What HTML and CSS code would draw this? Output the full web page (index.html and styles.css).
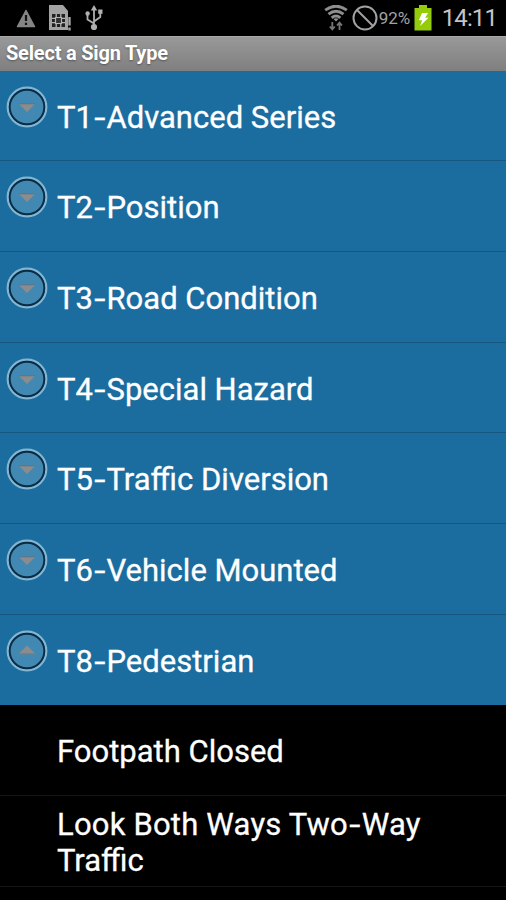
FILE: index.html
```
<!DOCTYPE html>
<html lang="en">
<head>
  <meta charset="utf-8">
  <title>Select a Sign Type</title>
  <link rel="stylesheet" href="styles.css">
</head>
<body>
  <!-- shared shapes for the expand / collapse buttons -->
  <svg class="defs" width="0" height="0">
    <symbol id="ring" viewBox="0 0 42 42">
      <circle cx="21" cy="21" r="19.3" fill="#4189b3" stroke="#83b6d3" stroke-width="2.2"/>
      <circle cx="21" cy="21" r="17.3" fill="none" stroke="#0b2c43" stroke-width="1.9"/>
    </symbol>
    <symbol id="down" viewBox="0 0 42 42">
      <use href="#ring"/>
      <path d="M13 18h16l-8 8z" fill="#8c8c8c"/>
      <path d="M13 17.8h16" stroke="#5c7686" stroke-width="1"/>
    </symbol>
    <symbol id="up" viewBox="0 0 42 42">
      <use href="#ring"/>
      <path d="M13 23.5h16l-8-8z" fill="#8c8c8c"/>
      <path d="M13 24h16" stroke="#6c8390" stroke-width="1"/>
    </symbol>
  </svg>

  <div class="status-bar">
    <div class="notifications">
      <svg class="warning" width="20" height="19" viewBox="0 0 20 19">
        <path d="M10 1.5L18.5 17.5h-17z" fill="#858585" stroke="#858585" stroke-width="1.5" stroke-linejoin="round"/>
        <path d="M10 6v6M10 13.7v2.4" stroke="#111" stroke-width="2.2"/>
      </svg>
      <svg class="sim" width="24" height="28" viewBox="0 0 24 28">
        <path d="M1 1h14l5 6v19H1z" fill="#a3a3a3"/>
        <path d="M4 10h13v13H4z" fill="#222"/>
        <path d="M4 14.3h13M4 18.7h13M8.2 10v13M12.8 10v13" stroke="#b5b5b5" stroke-width="1.3"/>
        <path d="M7.5 13.5h6v6h-6z" fill="#333" stroke="#b5b5b5" stroke-width="1.2"/>
        <path d="M21.5 13v8.5M21.5 23.5v3" stroke="#a3a3a3" stroke-width="2.4"/>
      </svg>
      <svg class="usb" width="18" height="26" viewBox="0 0 18 26">
        <path d="M9 5v17M9 18.5L2.5 14.5V9M9 16.5L15.3 12V7" fill="none" stroke="#b0b0b0" stroke-width="1.8"/>
        <path d="M9 0l3.2 5.5H5.8z" fill="#b0b0b0"/>
        <circle cx="9" cy="22" r="3.1" fill="#b0b0b0"/>
        <circle cx="2.6" cy="8.5" r="2.2" fill="#b0b0b0"/>
        <path d="M13.2 4.5h4.3v4.3h-4.3z" fill="#b0b0b0"/>
      </svg>
    </div>
    <div class="system">
      <svg class="wifi" width="24" height="26" viewBox="0 0 24 26">
        <g fill="none" stroke="#8e8e8e" stroke-width="2.9">
          <path d="M1.2 5.1Q12-2.7 22.8 5.1"/>
          <path d="M4.5 9.2Q12 3.3 19.5 9.2"/>
          <path d="M7.7 12.8Q12 9 16.3 12.8"/>
        </g>
        <path d="M9.5 14Q12 12.3 14.5 14L12 16.5z" fill="#8e8e8e"/>
        <path d="M8.3 17v7M5.8 21.5l2.5 2.8 2.5-2.8M15.5 25v-7M13 20.5l2.5-2.8 2.5 2.8" fill="none" stroke="#777" stroke-width="1.8"/>
      </svg>
      <svg class="no-signal" width="26" height="26" viewBox="0 0 26 26">
        <circle cx="13" cy="13" r="11.5" fill="none" stroke="#a2a2a2" stroke-width="2"/>
        <path d="M5 5l16 16" stroke="#a2a2a2" stroke-width="2"/>
      </svg>
      <span class="percent">92%</span>
      <svg class="battery" width="18" height="26" viewBox="0 0 18 26">
        <path d="M5 0h8v3h4.5v22.5H.5V3H5z" fill="#94cc0c"/>
        <path d="M8 8h6l-2.8 4.8h3.3L6 21l2.3-5.8H4.8z" fill="#fff"/>
      </svg>
      <span class="clock">14:11</span>
    </div>
  </div>

  <h1 class="title-bar">Select a Sign Type</h1>

  <ul class="groups">
    <li class="group"><svg class="toggle"><use href="#down"/></svg><span>T1<i>-</i>Advanced Series</span></li>
    <li class="group"><svg class="toggle"><use href="#down"/></svg><span>T2<i>-</i>Position</span></li>
    <li class="group"><svg class="toggle"><use href="#down"/></svg><span>T3<i>-</i>Road Condition</span></li>
    <li class="group"><svg class="toggle"><use href="#down"/></svg><span>T4<i>-</i>Special Hazard</span></li>
    <li class="group"><svg class="toggle"><use href="#down"/></svg><span>T5<i>-</i>Traffic Diversion</span></li>
    <li class="group"><svg class="toggle"><use href="#down"/></svg><span>T6<i>-</i>Vehicle Mounted</span></li>
    <li class="group"><svg class="toggle"><use href="#up"/></svg><span>T8<i>-</i>Pedestrian</span></li>
  </ul>
  <ul class="children">
    <li class="child">Footpath Closed</li>
    <li class="child"><div><span class="wide">Look Both Ways Two<i>-</i>Way</span> Traffic</div></li>
  </ul>
</body>
</html>
```
FILE: styles.css
```
body {
  margin: 0;
  height: 900px;
  overflow: hidden;
  background-color: #000;
  color: #fff;
  font-family: Roboto, "Liberation Sans", sans-serif;
}

ul {
  list-style: none;
  margin: 0;
  padding: 0;
}

.defs {
  display: block;
}

/* status bar */
.status-bar {
  display: flex;
  justify-content: space-between;
  height: 36px;
  box-sizing: border-box;
  padding: 0 9px 0 16px;
}

.notifications,
.system {
  display: flex;
  align-items: center;
}

.warning {
  margin-top: 1px;
}

.sim {
  margin-left: 12px;
}

.usb {
  margin-left: 13px;
}

.no-signal {
  margin-left: 4px;
}

.percent {
  width: 33px;
  margin-left: 1px;
  color: #a2a2a2;
  font-size: 17px;
  white-space: nowrap;
}

.battery {
  margin-left: 2px;
}

.clock {
  margin-left: 10px;
  color: #c4c4c4;
  font-size: 24px;
  letter-spacing: -0.9px;
}

/* title */
.title-bar {
  box-sizing: border-box;
  height: 34.5px;
  margin: 0;
  padding-left: 6px;
  background: linear-gradient(#999, #7f7f7f);
  border-top: 1px solid #aaa;
  font-size: 20px;
  font-weight: bold;
  letter-spacing: -0.2px;
  line-height: 33px;
  text-shadow: 0 1px 2px #555;
}

/* list */
.group,
.child {
  display: flex;
  align-items: center;
  box-sizing: border-box;
  height: 90.7px;
  font-size: 31px;
  line-height: 36.5px;
  -webkit-text-stroke: 0.3px #fff;
}

.group {
  background-color: #1b6d9f;
  border-bottom: 1px solid #17577f;
  padding-top: 5px;
}

.group:last-child {
  border-bottom: none;
}

/* slightly wider dash between code and name */
.group i,
.child i {
  display: inline-block;
  font-style: normal;
  padding: 0 2.5px;
  transform: scaleX(1.3);
}

.toggle {
  align-self: flex-start;
  width: 42px;
  height: 42px;
  margin: 10px 9px 0 6px;
}

.child {
  padding: 5px 60px 0 57px;
  border-bottom: 1px solid #161616;
}

.wide {
  letter-spacing: 0.2px;
}
```
